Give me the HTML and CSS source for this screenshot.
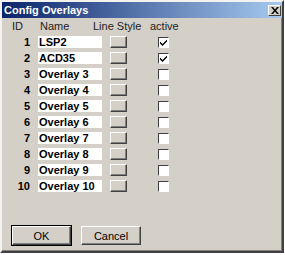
FILE: index.html
```html
<!DOCTYPE html>
<html lang="en">
  <head>
    <meta charset="UTF-8" />
    <title>Config Overlays</title>
    <link rel="stylesheet" href="styles.css">
  </head>
  <body>
    <div class="window">
      <div class="titlebar">
        <span class="title">Config Overlays</span>
        <span class="close">
          <svg width="8" height="7" viewBox="0 0 8 7">
            <path d="M0 0h2l2 2.5L6 0h2L5 3.5 8 7H6L4 4.5 2 7H0l3-3.5z" fill="#000" />
          </svg>
        </span>
      </div>

      <div class="head">
        <span class="h-id">ID</span>
        <span class="h-name">Name</span>
        <span class="h-style">Line Style</span>
        <span class="h-active">active</span>
      </div>

      <div class="rows" id="rows"></div>

      <div class="actions">
        <button class="btn default">OK</button>
        <button class="btn">Cancel</button>
      </div>
    </div>

    <script>
      const overlays = [
        { name: "LSP2", active: true },
        { name: "ACD35", active: true },
        { name: "Overlay 3", active: false },
        { name: "Overlay 4", active: false },
        { name: "Overlay 5", active: false },
        { name: "Overlay 6", active: false },
        { name: "Overlay 7", active: false },
        { name: "Overlay 8", active: false },
        { name: "Overlay 9", active: false },
        { name: "Overlay 10", active: false },
      ];

      const rows = document.getElementById("rows");
      overlays.forEach((o, i) => {
        const row = document.createElement("div");
        row.className = "row";
        row.innerHTML = `
          <span class="id">${i + 1}</span>
          <span class="name">${o.name}</span>
          <span class="style-btn"></span>
          <span class="check">${
            o.active
              ? '<svg width="7" height="7" viewBox="0 0 7 7"><path d="M0 2.5l2.5 2.5L7 0.5V2.5L2.5 7 0 4.5z" fill="#000"/></svg>'
              : ""
          }</span>
        `;
        rows.appendChild(row);
      });
    </script>
  </body>
</html>
```

FILE: styles.css
```css
body {
  margin: 0;
  background: #fff;
  font-family: "Liberation Sans Narrow", "Liberation Sans", Arial, sans-serif;
  font-size: 11px;
  color: #000;
}
.window {
  width: 280px;
  height: 249px;
  background: #d4d0c8;
  border: 2px solid;
  border-color: #f4f3ef #404040 #404040 #f4f3ef;
  box-shadow: inset -1px -1px 0 #808080;
}
.titlebar {
  height: 16px;
  display: flex;
  align-items: center;
  justify-content: space-between;
  padding: 0 1px 0 2px;
  background: linear-gradient(to right, #0a246a, #a6caf0);
}
.title {
  color: #fff;
  font-weight: bold;
  font-size: 11px;
}
.close {
  width: 11px;
  height: 9px;
  display: flex;
  align-items: center;
  justify-content: center;
  background: #d4d0c8;
  border: 1px solid;
  border-color: #fff #404040 #404040 #fff;
}
.head {
  display: flex;
  align-items: center;
  height: 16px;
  color: #222;
}
.h-id {
  margin-left: 10px;
  width: 28px;
}
.h-name {
  width: 53px;
}
.h-style {
  width: 57px;
}
.row {
  display: flex;
  align-items: center;
  height: 16px;
}
.id {
  width: 28px;
  text-align: right;
  font-weight: bold;
  font-family: "Liberation Sans", Arial, sans-serif;
}
.name {
  margin-left: 8px;
  width: 63px;
  height: 12px;
  line-height: 12px;
  padding-left: 1px;
  background: #fff;
  font-weight: bold;
  font-family: "Liberation Sans", Arial, sans-serif;
  overflow: hidden;
  white-space: nowrap;
}
.style-btn {
  margin-left: 8px;
  width: 15px;
  height: 10px;
  border: 1px solid;
  border-color: #fff #404040 #404040 #fff;
  box-shadow: inset -1px -1px 0 #808080;
}
.check {
  margin-left: 31px;
  width: 9px;
  height: 9px;
  display: flex;
  align-items: center;
  justify-content: center;
  background: #fff;
  border: 1px solid;
  border-color: #404040 #fff #fff #404040;
}
.actions {
  display: flex;
  gap: 10px;
  margin-top: 32px;
  padding-left: 10px;
}
.btn {
  width: 60px;
  height: 19px;
  padding: 0;
  font-family: inherit;
  font-size: 11px;
  background: #d4d0c8;
  border: 1px solid;
  border-color: #fff #404040 #404040 #fff;
  box-shadow: inset -1px -1px 0 #808080;
}
.btn.default {
  width: 59px;
  outline: 1px solid #000;
}
```
